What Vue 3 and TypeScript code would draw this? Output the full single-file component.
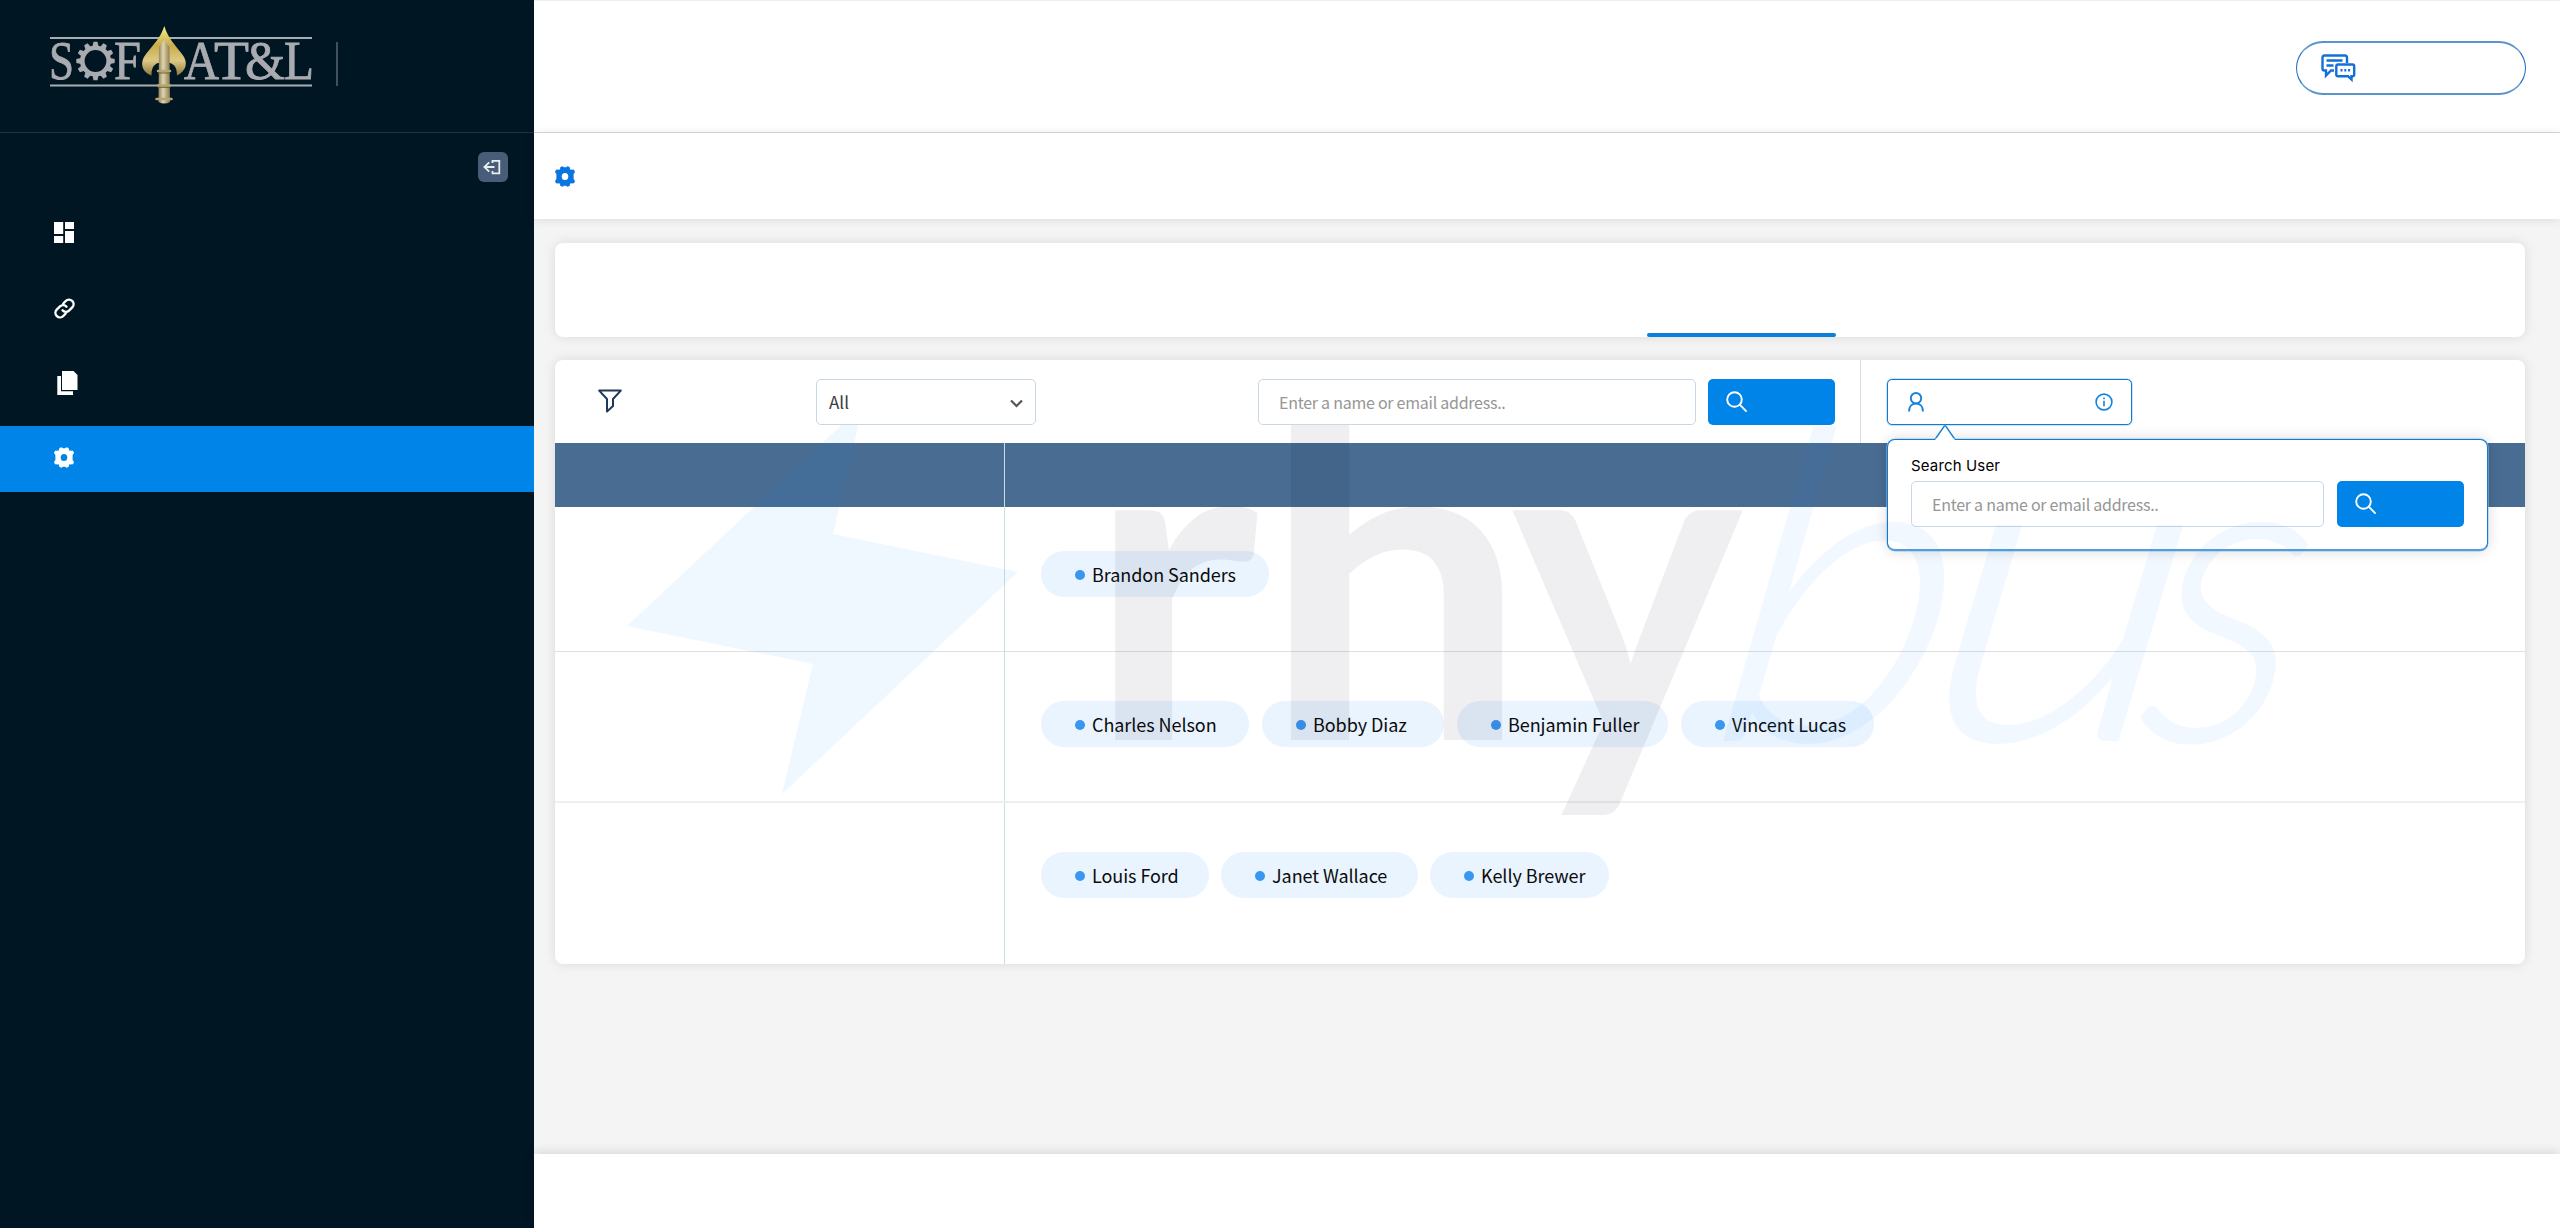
<script setup lang="ts">
interface Chip { name: string; width: number }
interface Row { id: number; height: number; offset: number; chips: Chip[] }

const rows: Row[] = [
  { id: 1, height: 145, offset: 44, chips: [{ name: 'Brandon Sanders', width: 228 }] },
  {
    id: 2, height: 151, offset: 49, chips: [
      { name: 'Charles Nelson', width: 208 },
      { name: 'Bobby Diaz', width: 182 },
      { name: 'Benjamin Fuller', width: 211 },
      { name: 'Vincent Lucas', width: 193 },
    ],
  },
  {
    id: 3, height: 161, offset: 49, chips: [
      { name: 'Louis Ford', width: 168 },
      { name: 'Janet Wallace', width: 197 },
      { name: 'Kelly Brewer', width: 179 },
    ],
  },
]

const gearTeeth: number[] = Array.from({ length: 12 }, (_, i) => i * 30)
const placeholder = 'Enter a name or email address..'
const gearPath =
  'M7.600 .2 8.800 1.300H11.200L12.400 .2 14.600 1 15.100 3.600 19 3.700 20 5.900 18.600 8V13L20 15.100 19 17.300 15.100 17.400 14.600 20 12.400 20.800 11.200 19.700H8.800L7.600 20.800 5.400 20 4.900 17.400 1 17.300 0 15.100 1.400 13V8L0 5.900 1 3.700 4.900 3.600 5.400 1ZM10 7a3.300 3.500 0 1 0 0 7 3.300 3.500 0 0 0 0-7Z'
</script>

<template>
  <div class="app">
    <aside class="sidebar">
      <div class="brand">
        <svg class="logo" width="350" height="110" viewBox="0 0 350 110">
          <defs>
            <linearGradient id="gold" x1="0" y1="0" x2="0" y2="1">
              <stop offset="0" stop-color="#f3ec8e" />
              <stop offset=".4" stop-color="#c9ac4a" />
              <stop offset=".7" stop-color="#dcc985" />
              <stop offset="1" stop-color="#8d7840" />
            </linearGradient>
            <linearGradient id="shaft" x1="0" y1="0" x2="1" y2="0">
              <stop offset="0" stop-color="#8e8058" />
              <stop offset=".4" stop-color="#e0d6ae" />
              <stop offset="1" stop-color="#8a7a4e" />
            </linearGradient>
          </defs>
          <path d="M50 38H312M50 85.500H312" stroke="#a7adb1" stroke-width="2.200" />
          <g class="logo-text">
            <text x="49" y="78.500" textLength="25" lengthAdjust="spacingAndGlyphs">S</text>
            <text x="114" y="78.500" textLength="27" lengthAdjust="spacingAndGlyphs">F</text>
            <text x="184" y="78.500" textLength="35" lengthAdjust="spacingAndGlyphs">A</text>
            <text x="214" y="78.500" textLength="35" lengthAdjust="spacingAndGlyphs">T</text>
            <text x="245" y="78.500" textLength="40" lengthAdjust="spacingAndGlyphs">&amp;</text>
            <text x="284" y="78.500" textLength="30" lengthAdjust="spacingAndGlyphs">L</text>
          </g>
          <g transform="translate(95.500 61)">
            <circle r="13.200" fill="none" stroke="#a9abb0" stroke-width="4.600" />
            <path v-for="a in gearTeeth" :key="a" :transform="`rotate(${a})`" d="M-3-14.500-2-19.200H2L3-14.500Z" fill="#a9abb0" />
          </g>
          <path d="M164.300 26C168 38 175 45 182 54C189 63 186 71 177 75.500C177 68 175 65 170 63H158C153 65 151.500 69 151.500 75.500C142 72 139 63 146 54C153 45 160.500 38 164.300 26Z" fill="url(#gold)" />
          <path d="M164.300 40L159 47L158.500 102Q164 105 170 102L169.500 47Z" fill="url(#shaft)" />
          <path d="M158 71H170M158 85.500H170M156.500 99H171.500" stroke="#b7a673" stroke-width="2.500" stroke-linecap="round" />
          <path d="M158 73H170M158 87.300H170" stroke="#6b5f3b" stroke-width="1" />
          <path d="M337 42V86" stroke="#5a6670" stroke-width="1.500" />
        </svg>
      </div>
      <div class="collapse-row">
        <button class="collapse">
          <svg width="30" height="30" viewBox="0 0 30 30" fill="none" stroke="#e8edf2" stroke-width="1.800">
            <path d="M14.500 11V8.800H21.300V21.300H14.500V19M6.500 15H16.500M11.200 10.400 6.400 15 11.200 19.600" />
          </svg>
        </button>
      </div>
      <nav class="nav">
        <div class="nav-item first">
          <svg width="20" height="21" viewBox="0 0 20 21" fill="#fff"><path d="M0 0H9.200V12H0ZM11 0H20V7H11ZM0 14H9.200V21H0ZM11 9H20V21H11Z" /></svg>
        </div>
        <div class="nav-item second">
          <svg width="21" height="21" viewBox="0 0 21 21" fill="none" stroke="#fff" stroke-width="2.400" stroke-linecap="round">
            <path d="M9.300 5.500 11.700 3A4.500 4.500 0 0 1 18.300 9.300L15 12.700A4.500 4.500 0 0 1 8.500 12.300M11.700 15.500 9.300 18A4.500 4.500 0 0 1 2.700 11.700L6 8.300A4.500 4.500 0 0 1 12.500 8.700" />
          </svg>
        </div>
        <div class="nav-item third">
          <svg width="21" height="24" viewBox="0 0 21 24" fill="#fff"><path d="M5 0H16.500L20.500 4V19H5Z" /><path d="M.3 5H4V20.300H16V24H.3Z" /></svg>
        </div>
        <div class="nav-item active">
          <svg width="20" height="21" viewBox="0 0 20 21" fill="#fff" fill-rule="evenodd"><path :d="gearPath" /></svg>
        </div>
      </nav>
    </aside>

    <div class="page">
      <header class="topbar">
        <button class="chat">
          <svg width="35" height="28" viewBox="0 0 35 28" fill="none" stroke="#146fd6" stroke-width="2.400">
            <path d="M26 9V3.500Q26 1.500 24 1.500H3.500Q1.500 1.500 1.500 3.500V14.500Q1.500 16.500 3.500 16.500H5V21.500L10 16.500H13" />
            <path d="M5.500 6.500H21.500M5.500 11.500H12.500" />
            <path d="M17 10.500H31.500Q33.200 10.500 33.200 12.200V20.500Q33.200 22.200 31.500 22.200H30.500V25.500L27 22.200H17Q15.300 22.200 15.300 20.500V12.200Q15.300 10.500 17 10.500Z" />
            <path d="M19.500 16.300H21.500M23.300 16.300H25.300M27.100 16.300H29.100" />
          </svg>
        </button>
      </header>
      <div class="subbar">
        <svg width="20" height="21" viewBox="0 0 20 21" fill="#0a74e0" fill-rule="evenodd"><path :d="gearPath" /></svg>
      </div>

      <main class="content">
        <section class="card tabs"><span class="tab-line"></span></section>

        <section class="card board">
          <div class="toolbar">
            <svg class="funnel" width="24" height="24" viewBox="0 0 24 24" fill="none" stroke="#1d3a58" stroke-width="2" stroke-linejoin="round">
              <path d="M1.200 1.600H22.800L15 10V17L9 22.500V10Z" />
            </svg>
            <div class="select raised">
              <span>All</span>
              <svg width="13" height="9" viewBox="0 0 13 9" fill="none" stroke="#555" stroke-width="2.200"><path d="M1 1.500 6.500 7 12 1.500" /></svg>
            </div>
            <div class="field main-field raised">{{ placeholder }}</div>
            <button class="search main-search raised">
              <svg width="22" height="22" viewBox="0 0 22 22" fill="none" stroke="#fff" stroke-width="1.900"><circle cx="8.500" cy="8.500" r="7.300" /><path d="M13.700 13.700 20.600 20.600" /></svg>
            </button>
            <div class="user-area">
              <div class="user-button raised">
                <svg width="16" height="20" viewBox="0 0 16 20" fill="none" stroke="#1783da" stroke-width="1.900"><circle cx="8" cy="6.200" r="5.200" /><path d="M1 19.500C1 14.500 4 11.500 8 11.500S15 14.500 15 19.500" /></svg>
                <svg width="18" height="18" viewBox="0 0 18 18" fill="none" stroke="#1783da" stroke-width="1.600"><circle cx="9" cy="9" r="7.900" /><path d="M9 7.800V13.200M9 4.600V6.300" /></svg>
              </div>
              <div class="popup">
                <svg class="arrow" width="22" height="16" viewBox="0 0 22 16"><path d="M1 15.500 11 1 21 15.500" fill="#fff" stroke="#1783da" stroke-width="1.400" /><path d="M1.500 15.500H20.500" stroke="#fff" stroke-width="2" /></svg>
                <label class="popup-label">Search User</label>
                <div class="popup-row">
                  <div class="field popup-field">{{ placeholder }}</div>
                  <button class="search popup-search">
                    <svg width="22" height="22" viewBox="0 0 22 22" fill="none" stroke="#fff" stroke-width="1.900"><circle cx="8.500" cy="8.500" r="7.300" /><path d="M13.700 13.700 20.600 20.600" /></svg>
                  </button>
                </div>
              </div>
            </div>
          </div>
          <div class="table-head"><div class="cell-name"></div><div class="cell-users"></div></div>
          <div v-for="row in rows" :key="row.id" class="row" :class="'row-' + row.id" :style="{ height: row.height + 'px' }">
            <div class="cell-name"></div>
            <div class="cell-users" :style="{ paddingTop: row.offset + 'px' }">
              <div v-for="chip in row.chips" :key="chip.name" class="chip" :style="{ width: chip.width + 'px' }">
                <i class="dot"></i><span>{{ chip.name }}</span>
              </div>
            </div>
          </div>
        </section>
      </main>
      <footer class="footer"></footer>
    </div>

    <svg class="watermark" width="2560" height="1228" viewBox="0 0 2560 1228">
      <path d="M863 405 833 534 1018 572 782 794 813 664 627 626Z" fill="#007dff" fill-opacity=".063" />
      <g class="wm-bold">
        <text transform="translate(1087 740) scale(1.030 1)">r</text>
        <text transform="translate(1262 740) scale(1.055 1)">h</text>
        <text transform="translate(1511 740) scale(.982 1)">y</text>
      </g>
      <g class="wm-light">
        <text transform="translate(1706 740) skewX(-9) scale(1.060 1)">b</text>
        <text transform="translate(1915 740) skewX(-9) scale(1.170 1)">u</text>
        <text transform="translate(2134 740) skewX(-9) scale(.920 1)">s</text>
      </g>
    </svg>
  </div>
</template>

<style>
body { margin: 0; overflow: hidden; }
</style>

<style scoped>
* { box-sizing: border-box; }
.app { position: relative; display: flex; width: 2560px; height: 1228px; overflow: hidden; background: #f4f4f4; font-family: "Noto Sans CJK SC", "Noto Sans", sans-serif; }
button { margin: 0; padding: 0; border: 0; font: inherit; }
svg { display: block; flex: none; }
.sidebar { width: 534px; flex: none; background: #011623; }
.brand { height: 133px; border-bottom: 1px solid #22333f; }
.logo-text { font-family: "Liberation Serif", serif; font-size: 54px; fill: #a9abb0; stroke: #a9abb0; stroke-width: .8px; }
.collapse-row { display: flex; justify-content: flex-end; padding: 19px 26px 0 0; }
.collapse { width: 30px; height: 30px; border-radius: 6px; background: #485d77; }
.nav { padding-top: 17px; }
.nav-item { display: flex; align-items: center; height: 66px; padding-left: 54px; }
.first { height: 67px; }
.second { height: 86px; padding-bottom: 1px; }
.third { height: 74px; padding-left: 57px; padding-bottom: 12px; }
.active { padding-bottom: 3px; background: #0084e8; }
.page { flex: 1; display: flex; flex-direction: column; }
.topbar { display: flex; justify-content: flex-end; height: 133px; padding: 40px 34px 0 0; background: #fff; border-top: 1px solid #efefef; border-bottom: 1px solid #d6d9db; }
.chat { display: flex; align-items: center; width: 230px; height: 54px; padding-left: 24px; border: solid #5b94cb; border-width: 2px 1px; border-left-color: #1a6fc4; border-right-color: #1a6fc4; border-radius: 27px; background: #fff; }
.subbar { display: flex; align-items: center; height: 86px; padding: 1px 0 0 21px; background: #fff; box-shadow: 0 1px 10px rgba(0, 0, 0, .1); }
.content { flex: 1; padding: 24px 35px 0 21px; }
.card { background: #fff; border-radius: 8px; box-shadow: 0 0 12px rgba(0, 0, 0, .11); }
.tabs { display: flex; align-items: flex-end; height: 94px; padding-left: 1092px; }
.tab-line { width: 189px; height: 4px; border-radius: 2px; background: #0a80da; }
.board { height: 604px; margin-top: 23px; }
.toolbar { display: flex; height: 83px; padding: 19px 0 0 43px; }
.raised { position: relative; z-index: 3; }
.funnel { margin-top: 10px; }
.select { display: flex; align-items: center; justify-content: space-between; width: 220px; height: 46px; margin-left: 194px; padding: 0 12px; border: 1px solid #c8d7e4; border-radius: 5px; background: #fff; font-size: 17px; color: #3c3c3c; }
.select span { margin-top: -1px; }
.select svg { margin-top: 3px; }
.field { display: flex; align-items: center; height: 46px; padding: 0 20px 1px; border: 1px solid #cad8e6; border-radius: 5px; background: #fff; font-size: 16px; letter-spacing: -.26px; color: #969696; white-space: nowrap; }
.main-field { width: 438px; margin-left: 222px; }
.search { display: flex; align-items: center; height: 46px; border-radius: 5px; background: #0084e8; }
.main-search { width: 127px; margin-left: 12px; padding-left: 18px; }
.user-area { position: relative; height: 83px; margin: -19px 0 0 25px; padding: 19px 0 0 26px; border-left: 1px solid #dcdfe1; }
.user-button { display: flex; align-items: center; justify-content: space-between; width: 245px; height: 46px; padding: 0 18px 1px 20px; border: 1px solid #1878cc; border-radius: 5px; background: #fff; box-shadow: 0 0 0 .5px #8fc8f2; }
.popup { position: absolute; z-index: 1; left: 26px; top: 79px; width: 601px; height: 112px; padding: 16px 23px 0; border: 1px solid #1878cc; border-bottom: 2px solid #5a9dd6; border-radius: 8px; background: #fff; box-shadow: 0 0 0 .5px #8fc8f2, 0 0 14px rgba(0, 0, 0, .15); }
.arrow { position: absolute; left: 46px; top: -16px; }
.popup-label { display: block; height: 25px; font: 400 15px/19px Inter, "Noto Sans", sans-serif; letter-spacing: .15px; color: #000; }
.popup-row { display: flex; justify-content: space-between; }
.popup-field { width: 413px; }
.popup-search { width: 127px; padding-left: 18px; }
.table-head { display: flex; height: 64px; background: #496c92; }
.row { display: flex; }
.row-1 { border-bottom: 1px solid #dedfe0; }
.row-2 { border-bottom: 2px solid #eeefef; }
.cell-name { width: 450px; flex: none; border-right: 1px solid #cddde4; }
.cell-users { display: flex; align-items: flex-start; gap: 13px; padding-left: 36px; }
.row-3 .cell-users { gap: 12px; }
.chip { display: flex; align-items: center; height: 46px; padding: 0 0 1px 34px; border-radius: 23px; background: #e9f4ff; font-size: 18px; letter-spacing: -.06px; color: #0c0c0c; white-space: nowrap; }
.dot { width: 10px; height: 10px; margin: 3px 7px 0 0; border-radius: 50%; background: #3b96f0; }
.footer { height: 74px; background: #fff; box-shadow: 0 -2px 10px rgba(0, 0, 0, .12); }
.watermark { position: absolute; z-index: 2; left: 0; top: 0; pointer-events: none; }
.wm-bold { font-family: Lato, sans-serif; font-weight: 700; font-size: 448px; fill: #00001c; fill-opacity: .063; }
.wm-light { font-family: Lato, sans-serif; font-weight: 300; font-style: italic; font-size: 430px; fill: #0084ff; stroke: #0084ff; stroke-width: 2px; opacity: .052; }
</style>
